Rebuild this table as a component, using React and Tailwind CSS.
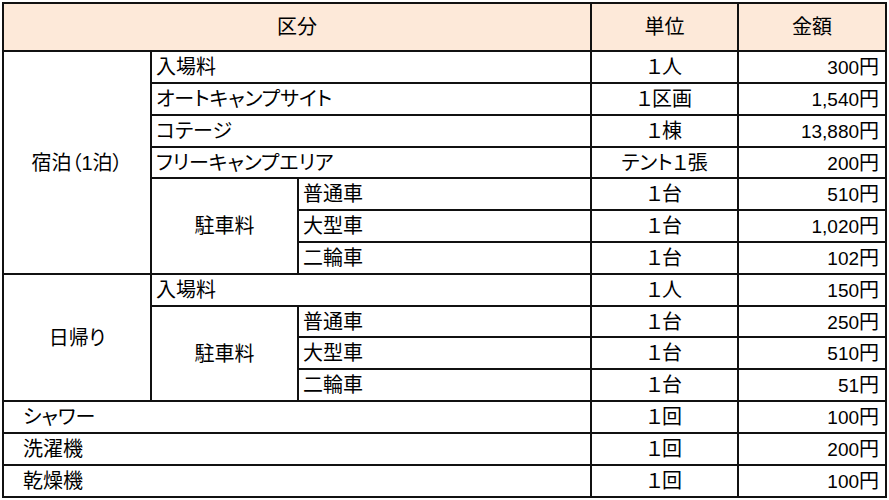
const cell = "border-2 border-[#111] px-[4px] text-[20px] leading-none text-black [font-feature-settings:'palt']";

function Td({ children, className = "", ...rest }) {
  return (
    <td className={`${cell} ${className}`} {...rest}>
      {children}
    </td>
  );
}

function Yen({ v }) {
  return (
    <Td className="text-right pr-[6px]">
      <span className="text-[19px]">{v}</span>円
    </Td>
  );
}

export default function App() {
  return (
    <div
      className="w-[889px] h-[500px] bg-white pt-[2px] pl-[2px]"
      style={{ fontFamily: '"Liberation Sans", "Noto Sans CJK JP", sans-serif' }}
    >
      <table className="table-fixed border-collapse w-[884px]">
        <colgroup>
          <col className="w-[148px]" />
          <col className="w-[147px]" />
          <col className="w-[293px]" />
          <col className="w-[147px]" />
          <col className="w-[148px]" />
        </colgroup>
        <thead>
          <tr className="h-[48px] bg-[#fde9d9]">
            <Td colSpan={3} className="text-center">区分</Td>
            <Td className="text-center">単位</Td>
            <Td className="text-center">金額</Td>
          </tr>
        </thead>
        <tbody>
          <tr className="h-[32px]">
            <Td rowSpan={7} className="text-center">宿泊（1泊）</Td>
            <Td colSpan={2}>入場料</Td>
            <Td className="text-center">１人</Td>
            <Yen v="300" />
          </tr>
          <tr className="h-[32px]">
            <Td colSpan={2}>オートキャンプサイト</Td>
            <Td className="text-center">１区画</Td>
            <Yen v="1,540" />
          </tr>
          <tr className="h-[32px]">
            <Td colSpan={2}>コテージ</Td>
            <Td className="text-center">１棟</Td>
            <Yen v="13,880" />
          </tr>
          <tr className="h-[31px]">
            <Td colSpan={2}>フリーキャンプエリア</Td>
            <Td className="text-center">テント１張</Td>
            <Yen v="200" />
          </tr>
          <tr className="h-[32px]">
            <Td rowSpan={3} className="text-center">駐車料</Td>
            <Td>普通車</Td>
            <Td className="text-center">１台</Td>
            <Yen v="510" />
          </tr>
          <tr className="h-[32px]">
            <Td>大型車</Td>
            <Td className="text-center">１台</Td>
            <Yen v="1,020" />
          </tr>
          <tr className="h-[32px]">
            <Td>二輪車</Td>
            <Td className="text-center">１台</Td>
            <Yen v="102" />
          </tr>
          <tr className="h-[32px]">
            <Td rowSpan={4} className="text-center">日帰り</Td>
            <Td colSpan={2}>入場料</Td>
            <Td className="text-center">１人</Td>
            <Yen v="150" />
          </tr>
          <tr className="h-[31px]">
            <Td rowSpan={3} className="text-center">駐車料</Td>
            <Td>普通車</Td>
            <Td className="text-center">１台</Td>
            <Yen v="250" />
          </tr>
          <tr className="h-[32px]">
            <Td>大型車</Td>
            <Td className="text-center">１台</Td>
            <Yen v="510" />
          </tr>
          <tr className="h-[32px]">
            <Td>二輪車</Td>
            <Td className="text-center">１台</Td>
            <Yen v="51" />
          </tr>
          <tr className="h-[32px]">
            <Td colSpan={3} className="pl-[19px]">シャワー</Td>
            <Td className="text-center">１回</Td>
            <Yen v="100" />
          </tr>
          <tr className="h-[32px]">
            <Td colSpan={3} className="pl-[19px]">洗濯機</Td>
            <Td className="text-center">１回</Td>
            <Yen v="200" />
          </tr>
          <tr className="h-[32px]">
            <Td colSpan={3} className="pl-[19px]">乾燥機</Td>
            <Td className="text-center">１回</Td>
            <Yen v="100" />
          </tr>
        </tbody>
      </table>
    </div>
  );
}
